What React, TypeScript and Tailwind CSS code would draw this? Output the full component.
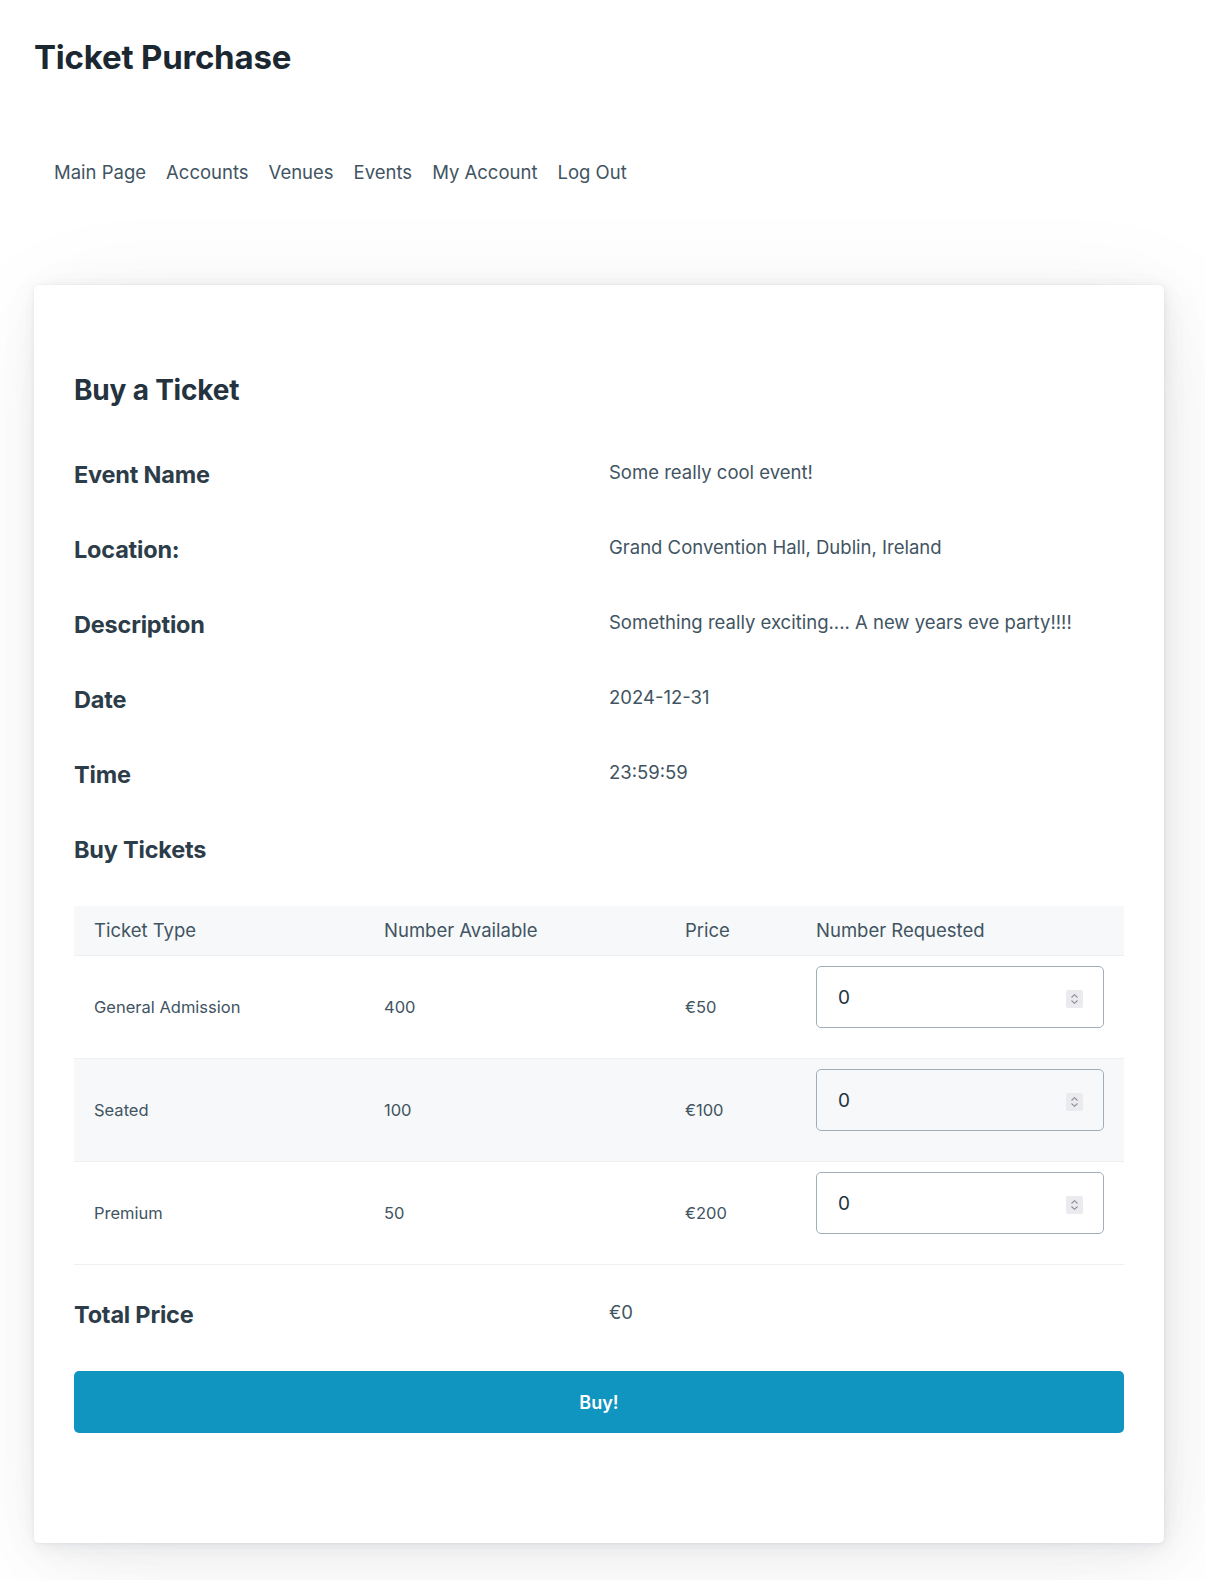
import React, { useState } from "react";

type TicketType = {
  name: string;
  available: number;
  price: number;
};

const TICKETS: TicketType[] = [
  { name: "General Admission", available: 400, price: 50 },
  { name: "Seated", available: 100, price: 100 },
  { name: "Premium", available: 50, price: 200 },
];

const NAV = ["Main Page", "Accounts", "Venues", "Events", "My Account", "Log Out"];

const DETAILS = [
  { label: "Event Name", value: "Some really cool event!" },
  { label: "Location:", value: "Grand Convention Hall, Dublin, Ireland" },
  { label: "Description", value: "Something really exciting.... A new years eve party!!!!" },
  { label: "Date", value: "2024-12-31" },
  { label: "Time", value: "23:59:59" },
];

const CARD_SHADOW =
  "shadow-[0.29px_0.58px_3.5px_rgba(27,40,50,0.017),0.67px_1.34px_8px_rgba(27,40,50,0.024),1.25px_2.5px_15px_rgba(27,40,50,0.03),2.25px_4.5px_27px_rgba(27,40,50,0.036),4.17px_8.34px_50px_rgba(27,40,50,0.043),10px_20px_120px_rgba(27,40,50,0.06),0_0_0_1.25px_rgba(27,40,50,0.015)]";

// little up/down stepper like the Safari one
const Stepper = () => (
  <div className="pointer-events-none absolute right-[21px] top-1/2 flex h-[18px] w-[17px] -translate-y-[7px] flex-col items-center justify-center gap-[2px] rounded-[2px] bg-[#ebebef]">
    <svg width="7" height="4" viewBox="0 0 7 4" fill="none" stroke="#8d8d98" strokeWidth="1.1">
      <path d="M0.5 3.5L3.5 0.7L6.5 3.5" />
    </svg>
    <svg width="7" height="4" viewBox="0 0 7 4" fill="none" stroke="#8d8d98" strokeWidth="1.1">
      <path d="M0.5 0.5L3.5 3.3L6.5 0.5" />
    </svg>
  </div>
);

export default function App() {
  const [counts, setCounts] = useState<number[]>(TICKETS.map(() => 0));

  const total = TICKETS.reduce((sum, t, i) => sum + t.price * (counts[i] || 0), 0);

  const updateCount = (i: number, v: string) => {
    const n = parseInt(v, 10);
    setCounts((prev) => prev.map((c, j) => (j === i ? (isNaN(n) ? 0 : n) : c)));
  };

  return (
    <div className="min-h-[1580px] bg-white px-[34px] pb-10 font-['Inter','Liberation_Sans',sans-serif] text-[#415462]">
      {/* Page header */}
      <header>
        <h1 className="pt-[37px] text-[33px] font-bold leading-[40px] tracking-[-0.2px] text-[#1b2832]">
          Ticket Purchase
        </h1>
        <nav className="mt-[80px]">
          <ul className="flex gap-[20px] pl-[20px]">
            {NAV.map((item) => (
              <li key={item}>
                <a href="#" className="text-[18.5px] leading-[30px] text-[#415462]">
                  {item}
                </a>
              </li>
            ))}
          </ul>
        </nav>
      </header>

      {/* Purchase card */}
      <article className={`mt-[98px] w-[1130px] rounded-[5px] bg-white px-[40px] pb-[110px] pt-[87px] ${CARD_SHADOW}`}>
        <h2 className="text-[28px] font-bold leading-[36px] tracking-[-0.2px] text-[#24333e]">Buy a Ticket</h2>

        <div className="mt-[52px] flex flex-col gap-[45px]">
          {DETAILS.map((d) => (
            <div key={d.label} className="grid grid-cols-2 gap-5">
              <h3 className="text-[23.5px] font-bold leading-[30px] tracking-[-0.2px] text-[#2c3d49]">{d.label}</h3>
              <p className="text-[18.5px] leading-[24px]">{d.value}</p>
            </div>
          ))}
          <h3 className="text-[23.5px] font-bold leading-[30px] tracking-[-0.2px] text-[#2c3d49]">Buy Tickets</h3>
        </div>

        <table className="mt-[41px] w-full border-collapse text-left">
          <thead>
            <tr className="bg-[#f6f8f9]">
              <th className="w-[290px] border-b border-[#edf0f3] px-5 py-[10px] text-[18.5px] font-normal leading-[29px]">Ticket Type</th>
              <th className="w-[301px] border-b border-[#edf0f3] px-5 py-[10px] text-[18.5px] font-normal leading-[29px]">Number Available</th>
              <th className="w-[131px] border-b border-[#edf0f3] px-5 py-[10px] text-[18.5px] font-normal leading-[29px]">Price</th>
              <th className="border-b border-[#edf0f3] px-5 py-[10px] text-[18.5px] font-normal leading-[29px]">Number Requested</th>
            </tr>
          </thead>
          <tbody>
            {TICKETS.map((t, i) => (
              <tr key={t.name} className={i % 2 === 1 ? "bg-[#f6f8f9]" : "bg-white"}>
                <td className="border-b border-[#edf0f3] px-5 text-[16.5px]">{t.name}</td>
                <td className="border-b border-[#edf0f3] px-5 text-[16.5px]">{t.available}</td>
                <td className="border-b border-[#edf0f3] px-5 text-[16.5px]">€{t.price}</td>
                <td className="border-b border-[#edf0f3] px-5 pb-[10px] pt-[10px]">
                  <div className="relative mb-[20px]">
                    <input
                      type="number"
                      min={0}
                      value={counts[i]}
                      onChange={(e) => updateCount(i, e.target.value)}
                      className="block h-[62px] w-full rounded-[5px] border border-[#a2afb9] bg-transparent px-[21px] pb-0 text-[19px] text-[#24333e] outline-none [appearance:textfield] [&::-webkit-inner-spin-button]:appearance-none [&::-webkit-outer-spin-button]:appearance-none"
                    />
                    <Stepper />
                  </div>
                </td>
              </tr>
            ))}
          </tbody>
        </table>

        <div className="mt-[35px] grid grid-cols-2 gap-5">
          <h3 className="text-[23.5px] font-bold leading-[30px] tracking-[-0.2px] text-[#2c3d49]">Total Price</h3>
          <p className="text-[18.5px] leading-[24px]">€{total}</p>
        </div>

        <button
          type="button"
          className="mt-[41px] block h-[62px] w-full rounded-[5px] bg-[#1095c1] text-[18px] font-semibold text-white"
        >
          Buy!
        </button>
      </article>
    </div>
  );
}
